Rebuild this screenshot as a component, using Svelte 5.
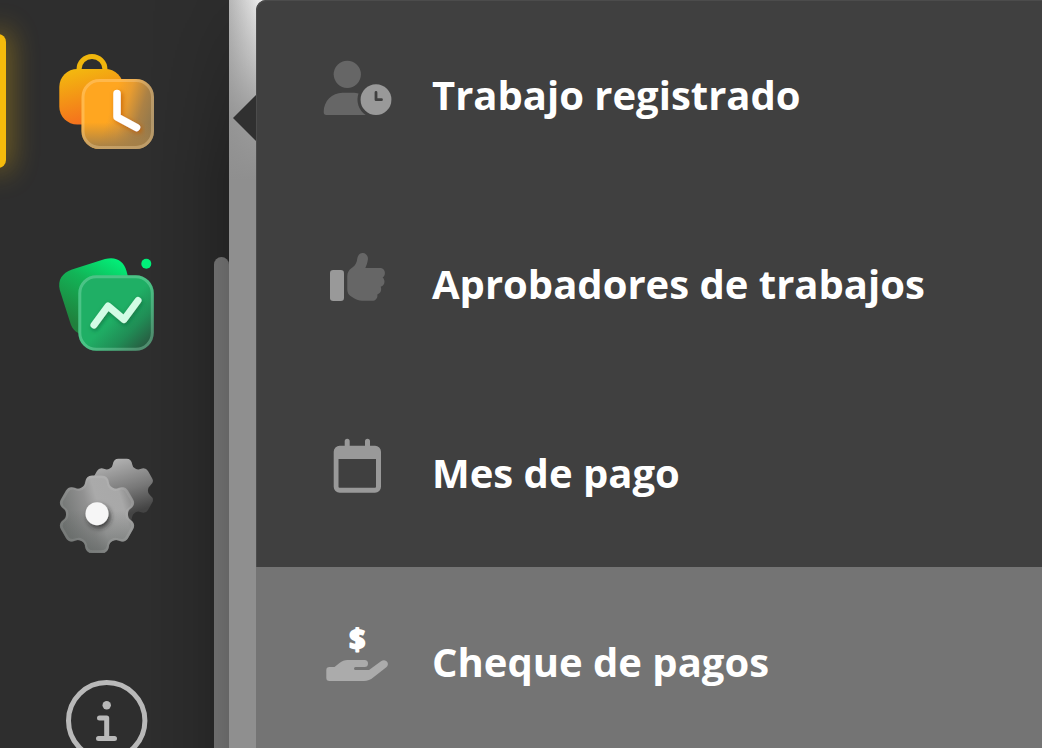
<script>
    const sections = [
        { name: 'Trabajo', icon: 'work' },
        { name: 'Informes', icon: 'reports' },
        { name: 'Ajustes', icon: 'settings' },
        { name: 'Ayuda', icon: 'info' },
    ];

    const entries = [
        { name: 'Trabajo registrado', icon: 'user-clock' },
        { name: 'Aprobadores de trabajos', icon: 'thumb' },
        { name: 'Mes de pago', icon: 'calendar' },
        { name: 'Cheque de pagos', icon: 'hand-dollar' },
    ];

    let selectedSection = $state('work');
    let selectedEntry = $state('hand-dollar');

    // six teeth, each one drawn pointing up and then rotated round the centre
    function gear(cx, cy, scale) {
        let d = '';
        for (let i = 0; i < 6; i++) {
            const a = (i * Math.PI) / 3;
            const p = (x, y) => {
                const px = cx + scale * (x * Math.cos(a) - y * Math.sin(a));
                const py = cy + scale * (x * Math.sin(a) + y * Math.cos(a));
                return `${px.toFixed(2)} ${py.toFixed(2)}`;
            };
            d += `${i ? 'L' : 'M'}${p(-15.5, -26.8)}Q${p(-12, -28.8)} ${p(-11.8, -32)}`;
            d += `Q${p(-11, -38.8)} ${p(-5, -38.8)}L${p(5, -38.8)}`;
            d += `Q${p(11, -38.8)} ${p(11.8, -32)}Q${p(12, -28.8)} ${p(15.5, -26.8)}`;
        }
        return d + 'Z';
    }
</script>

<div class="page">
    <aside class="sidebar">
        <nav class="sections">
            {#each sections as section}
                <button
                    class="section {section.icon}"
                    class:active={section.icon === selectedSection}
                    aria-label={section.name}
                    onclick={() => (selectedSection = section.icon)}
                >
                    <svg viewBox="0 0 96 96" aria-hidden="true">
                        {#if section.icon === 'work'}
                            <defs>
                                <linearGradient id="bag" x1="0.3" y1="0" x2="0.6" y2="1">
                                    <stop offset="0" stop-color="#f3b70f" />
                                    <stop offset="1" stop-color="#f56a1e" />
                                </linearGradient>
                                <linearGradient id="amber" x1="0.2" y1="0.35" x2="1" y2="0.6">
                                    <stop offset="0.25" stop-color="#ffa620" />
                                    <stop offset="0.48" stop-color="#e89c30" />
                                    <stop offset="0.75" stop-color="#ab8145" />
                                    <stop offset="1" stop-color="#8f774e" />
                                </linearGradient>
                                <linearGradient id="amber-foot" x1="0" y1="0" x2="0" y2="1">
                                    <stop offset="0.62" stop-color="#a58048" stop-opacity="0" />
                                    <stop offset="0.95" stop-color="#a58048" stop-opacity="0.9" />
                                </linearGradient>
                                <filter id="hand-shadow" x="-40%" y="-40%" width="180%" height="180%">
                                    <feDropShadow dx="2" dy="2" stdDeviation="2.5" flood-color="#c25b05" flood-opacity="0.8" />
                                </filter>
                            </defs>
                            <path d="M20 18V15.500a13 13 0 0 1 26 0V18" fill="none" stroke="#f0b60d" stroke-width="5" />
                            <rect x="0.3" y="15" width="64" height="55.500" rx="18" fill="url(#bag)" />
                            <rect x="22.500" y="25" width="72.500" height="70" rx="18" fill="url(#amber)" />
                            <rect x="22.500" y="25" width="72.500" height="70" rx="18" fill="url(#amber-foot)" />
                            <rect x="24" y="26.500" width="69.500" height="67" rx="16.500" fill="none" stroke="#ffe2b0" stroke-opacity="0.3" stroke-width="3" />
                            <path d="M58 39.500V63L77.500 73.500" class="line" stroke="#fff" stroke-width="7.500" filter="url(#hand-shadow)" />
                        {:else if section.icon === 'reports'}
                            <defs>
                                <linearGradient id="leaf" x1="0.8" y1="0" x2="0.3" y2="0.9">
                                    <stop offset="0" stop-color="#00f57c" />
                                    <stop offset="0.45" stop-color="#12b457" />
                                    <stop offset="1" stop-color="#20803c" />
                                </linearGradient>
                                <linearGradient id="mint" x1="0.3" y1="0.3" x2="1" y2="1">
                                    <stop offset="0.3" stop-color="#1faf65" />
                                    <stop offset="0.6" stop-color="#208c55" />
                                    <stop offset="0.85" stop-color="#276043" />
                                </linearGradient>
                                <filter id="line-shadow" x="-40%" y="-40%" width="180%" height="180%">
                                    <feDropShadow dx="1" dy="2" stdDeviation="2" flood-color="#0b6a3b" flood-opacity="0.7" />
                                </filter>
                            </defs>
                            <path d="M0.800 34C-1.500 24 3 17 13 13.500L46 3C57 0 65 5 67.500 15L78 55L30 80C19 79 13 74 11 66Z" fill="url(#leaf)" />
                            <rect x="19.300" y="19.300" width="75.500" height="75.500" rx="18" fill="url(#mint)" />
                            <rect x="20.800" y="20.800" width="72.500" height="72.500" rx="16.500" fill="none" stroke="#a8f0cc" stroke-opacity="0.32" stroke-width="3" />
                            <path d="M35 69L49 50L65 63.500L79 44.500" class="line" stroke="#d2fce5" stroke-width="7" filter="url(#line-shadow)" />
                            <circle cx="87.300" cy="7.700" r="5" fill="#00ef79" />
                        {:else if section.icon === 'settings'}
                            <defs>
                                <linearGradient id="steel" x1="0.4" y1="0" x2="0.7" y2="1">
                                    <stop offset="0" stop-color="#b2b2b2" />
                                    <stop offset="0.5" stop-color="#777" />
                                    <stop offset="0.85" stop-color="#444" />
                                </linearGradient>
                                <linearGradient id="silver" x1="0" y1="0.65" x2="1" y2="0.35">
                                    <stop offset="0" stop-color="#6c706e" />
                                    <stop offset="0.4" stop-color="#919191" />
                                    <stop offset="0.55" stop-color="#aaa" />
                                    <stop offset="0.85" stop-color="#a8a8a8" />
                                    <stop offset="1" stop-color="#888" />
                                </linearGradient>
                                <linearGradient id="silver-foot" x1="0" y1="0" x2="0" y2="1">
                                    <stop offset="0.45" stop-color="#5f6462" stop-opacity="0" />
                                    <stop offset="1" stop-color="#5f6462" stop-opacity="0.7" />
                                </linearGradient>
                                <filter id="hub-shadow" x="-50%" y="-50%" width="200%" height="200%">
                                    <feDropShadow dx="2" dy="3" stdDeviation="2.5" flood-color="#222" flood-opacity="0.75" />
                                </filter>
                            </defs>
                            <path d={gear(63.5, 32.5, 0.82)} fill="url(#steel)" />
                            <path d={gear(38, 56.3, 1)} fill="url(#silver)" />
                            <path d={gear(38, 56.3, 1)} fill="url(#silver-foot)" />
                            <path d={gear(38, 56.3, 0.96)} fill="none" stroke="#ddd" stroke-opacity="0.12" stroke-width="2.500" />
                            <circle cx="38" cy="55.700" r="11.500" fill="#f6f6f6" filter="url(#hub-shadow)" />
                        {:else}
                            <circle cx="47.700" cy="47.700" r="38.200" fill="none" stroke="#b9b9b9" stroke-width="5" />
                            <circle cx="47.700" cy="32.300" r="4.200" fill="#b9b9b9" />
                            <path d="M40.500 45H47.700V65.500M39.500 65.500H55.500" class="line" stroke="#b9b9b9" stroke-width="5" />
                        {/if}
                    </svg>
                </button>
            {/each}
        </nav>
        <div class="track"><div class="thumb"></div></div>
    </aside>

    <main class="menu">
        {#each entries as entry}
            <button
                class="entry"
                class:current={entry.icon === selectedEntry}
                onclick={() => (selectedEntry = entry.icon)}
            >
                <svg viewBox="0 0 72 56" aria-hidden="true">
                    {#if entry.icon === 'user-clock'}
                        <g fill="#666">
                            <circle cx="26.300" cy="14.300" r="13.600" />
                            <path d="M5.500 55C3.500 55 2.700 54 2.700 52C2.700 41 11 32.700 21.500 32.700H31.500C34 32.700 36 33 37.500 33.500A18.400 18.400 0 0 0 44.700 55Z" />
                        </g>
                        <circle cx="55" cy="39.700" r="15.400" fill="#999" />
                        <path d="M55 32.500V39.700H60.500" class="line" stroke="#404040" stroke-width="2.800" />
                    {:else if entry.icon === 'thumb'}
                        <rect x="9" y="21" width="14" height="31" rx="3.200" fill="#999" />
                        <path
                            d="M36.300 9.500C37 6 39 3.700 42 4C45.500 4.500 47.500 7.500 46.800 11C46.300 14 45.500 16.500 44.300 19H59C62 19 63.900 21.200 63.900 24C63.900 26 63 27.500 61.600 28.500C64.600 31 64 36.500 59.700 37.800C61 41.500 59.500 44.300 56.300 45.500C57 49 54.500 51.700 51.500 51.700H41C38 51.700 35.500 51 33 49.300L29.500 47C27.300 45.500 26.300 43 26.300 40.500V27C26.300 24 27.500 21.500 30 19.500L32 18C34.500 16 35.800 13.500 36.300 9.500Z"
                            fill="#666"
                        />
                    {:else if entry.icon === 'calendar'}
                        <path
                            d="M23.700 7.700V3.200a2.500 2.500 0 0 1 5 0V7.700H44V3.200a2.500 2.500 0 0 1 5 0V7.700H54a6 6 0 0 1 6 6V48.700a6 6 0 0 1-6 6H18.700a6 6 0 0 1-6-6V13.700a6 6 0 0 1 6-6ZM17.500 21V48.700a1 1 0 0 0 1 1H54a1 1 0 0 0 1-1V21Z"
                            fill="#999"
                            fill-rule="evenodd"
                        />
                    {:else}
                        <text x="36.300" y="23" text-anchor="middle">$</text>
                        <path
                            d="M8.500 40H13.500L18.500 36C21 34 23.500 33 26.500 33H43.500A3.500 3.500 0 0 1 43.500 40H34.500A1.200 1.200 0 0 0 34.500 43H48L60 34.200C65 31 69.500 37 65.300 40.300L52.500 50.300C49.500 52.800 46.500 54 43 54H8.500A3.200 3.200 0 0 1 5.300 50.800V43.200A3.200 3.200 0 0 1 8.500 40Z"
                            fill="#ababab"
                        />
                    {/if}
                </svg>
                <span>{entry.name}</span>
            </button>
        {/each}
    </main>
</div>

<style>
    :global(body) {
        background: #8f8f8f;
        overflow: hidden;
    }
    .page {
        display: flex;
        gap: 27px;
        height: 100vh;
        background:
            linear-gradient(to bottom, rgba(143, 143, 143, 0) 0, rgba(143, 143, 143, 0.4) 60px, rgba(143, 143, 143, 0.85) 120px, #8f8f8f 180px),
            linear-gradient(to right, #b5b5b5 229px, #e8e8e8 258px);
        font-family: 'Open Sans', 'Noto Sans', sans-serif;
    }
    button {
        border: none;
        background: none;
        font: inherit;
        color: inherit;
        cursor: pointer;
    }
    svg {
        display: block;
        flex: none;
        overflow: visible;
    }
    .line {
        fill: none;
        stroke-linecap: round;
        stroke-linejoin: round;
    }

    .sidebar {
        position: relative;
        display: flex;
        flex: none;
        width: 229px;
        overflow: hidden;
        background: #2e2e2e;
    }
    /* shade that the open menu throws on the sidebar */
    .sidebar::after {
        content: '';
        position: absolute;
        inset: 0;
        background: linear-gradient(to right, rgba(0, 0, 0, 0) 150px, rgba(0, 0, 0, 0.08) 190px, rgba(0, 0, 0, 0.22));
        mask-image: linear-gradient(to bottom, rgba(0, 0, 0, 0.2), #000 180px);
        pointer-events: none;
    }
    .sections {
        display: flex;
        flex: 1;
        flex-direction: column;
        gap: 106px;
        padding-top: 54px;
    }
    .section {
        position: relative;
        display: flex;
        justify-content: center;
        padding: 0;
    }
    .section svg {
        width: 96px;
        height: 96px;
    }
    .section.info {
        margin-top: 13px;
    }
    .section.active::before {
        content: '';
        position: absolute;
        top: -20px;
        bottom: -18px;
        left: -10px;
        width: 16px;
        border-radius: 10px;
        background: #f5bb0c;
        box-shadow: 0 0 28px 4px rgba(245, 187, 12, 0.4);
    }
    .track {
        width: 15px;
        padding-top: 257px;
    }
    .thumb {
        height: 100%;
        border-radius: 8px 8px 0 0;
        background: #828282;
    }

    .menu {
        position: relative;
        flex: 1;
        align-self: flex-start;
        border-radius: 10px 0 0 10px;
        background: #404040;
        box-shadow: inset 1px 1px #4c4c4c;
    }
    .menu::before {
        content: '';
        position: absolute;
        top: 95px;
        left: -23px;
        width: 23px;
        height: 46px;
        background: #303030;
        clip-path: polygon(100% 0, 100% 100%, 0 50%);
    }
    .entry {
        display: flex;
        align-items: center;
        gap: 39px;
        width: 100%;
        height: 189px;
        padding: 0 0 0 65px;
        color: #fff;
        font-size: 40px;
        font-weight: 700;
        line-height: 54px;
        text-align: left;
        white-space: nowrap;
    }
    .entry.current {
        background: #747474;
    }
    .entry svg {
        width: 72px;
        height: 56px;
        margin-bottom: 13px;
    }
    .entry text {
        fill: #fff;
        stroke: #fff;
        stroke-width: 2;
        stroke-linejoin: round;
        font-family: 'Open Sans', sans-serif;
        font-size: 28px;
        font-weight: 700;
        line-height: 28px;
    }
</style>
